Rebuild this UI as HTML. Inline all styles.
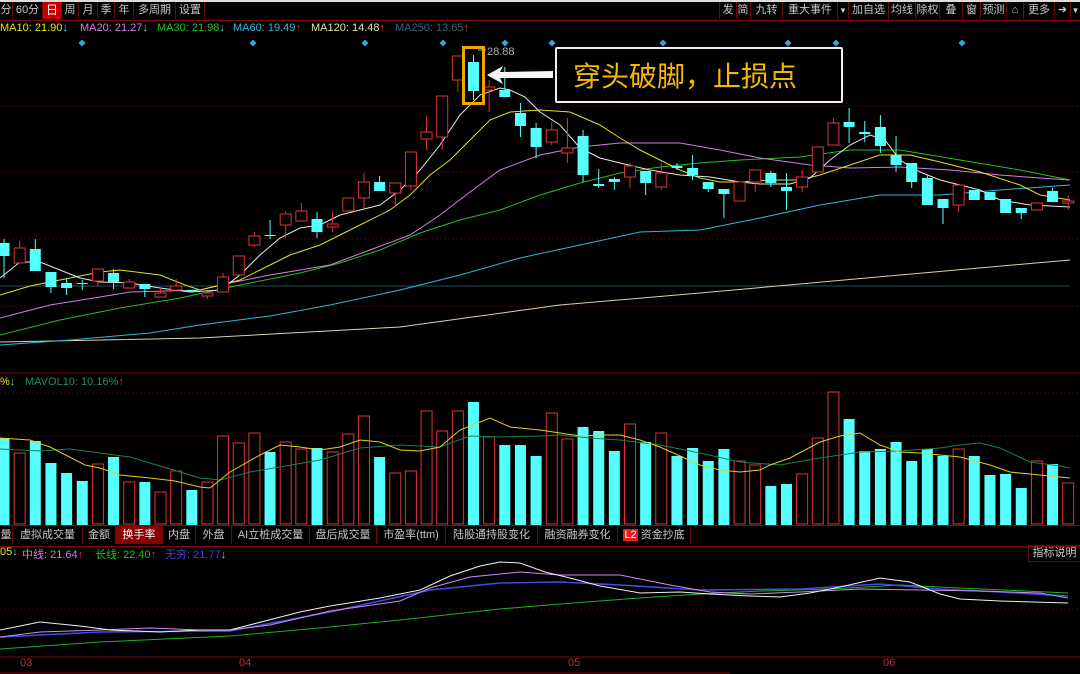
<!DOCTYPE html>
<html><head><meta charset="utf-8">
<style>
html,body{margin:0;padding:0;background:#000;}
body{width:1080px;height:674px;overflow:hidden;position:relative;font-family:"Liberation Sans","Noto Sans CJK SC",sans-serif;}
.t{position:absolute;white-space:nowrap;font-size:11px;}
.b{position:absolute;top:2px;height:17px;line-height:17px;font-size:11px;color:#c8c8c8;border-right:1px solid #6a0a0a;text-align:center;white-space:nowrap;overflow:hidden;}
.tb{position:absolute;top:526px;height:18px;line-height:18px;font-size:11px;color:#c8c8c8;border-right:1px solid #6a0a0a;text-align:center;white-space:nowrap;}
svg{position:absolute;left:0;top:0;}
</style></head><body>
<div style="position:absolute;left:0;top:0;width:1080px;height:2px;background:#ddd"></div>
<div style="position:absolute;left:0;top:20px;width:1080px;height:1px;background:#7a0c0c"></div>
<div class="b" style="left:0;width:12px">分</div>
<div class="b" style="left:13px;width:29px">60分</div>
<div class="b" style="left:43px;width:18px;background:#c40000;color:#fff;font-size:12px">日</div>
<div class="b" style="left:62px;width:16px">周</div>
<div class="b" style="left:79px;width:18px">月</div>
<div class="b" style="left:98px;width:16px">季</div>
<div class="b" style="left:115px;width:18px">年</div>
<div class="b" style="left:134px;width:41px">多周期</div>
<div class="b" style="left:176px;width:28px">设置</div>

<div class="b" style="left:719px;width:16px;border-left:1px solid #6a0a0a">发</div>
<div class="b" style="left:736px;width:14px">简</div>
<div class="b" style="left:751px;width:31px">九转</div>
<div class="b" style="left:783px;width:54px">重大事件</div>
<div class="b" style="left:838px;width:10px;font-size:8px">▼</div>
<div class="b" style="left:849px;width:39px">加自选</div>
<div class="b" style="left:889px;width:26px">均线</div>
<div class="b" style="left:916px;width:23px">除权</div>
<div class="b" style="left:940px;width:22px">叠</div>
<div class="b" style="left:963px;width:17px">窗</div>
<div class="b" style="left:981px;width:25px">预测</div>
<div class="b" style="left:1007px;width:16px">⌂</div>
<div class="b" style="left:1024px;width:30px">更多</div>
<div class="b" style="left:1055px;width:15px">➜</div>
<div class="b" style="left:1071px;width:9px;border:none;font-size:8px">▼</div>

<div class="t" style="left:0;top:22px;color:#e8e800">MA10: 21.90<span style="color:#5ad8ff">↓</span></div>
<div class="t" style="left:80px;top:22px;color:#d080e0">MA20: 21.27<span style="color:#5ad8ff">↓</span></div>
<div class="t" style="left:157px;top:22px;color:#20c020">MA30: 21.98<span style="color:#5ad8ff">↓</span></div>
<div class="t" style="left:233px;top:22px;color:#30b8d8">MA60: 19.49<span style="color:#ff3030">↑</span></div>
<div class="t" style="left:311px;top:22px;color:#e8e0b0">MA120: 14.48<span style="color:#ff3030">↑</span></div>
<div class="t" style="left:395px;top:22px;color:#3c6078">MA250: 13.65<span style="color:#ff3030">↑</span></div>

<div class="t" style="left:0;top:376px;color:#e8e800">%<span style="color:#5ad8ff">↓</span></div>
<div class="t" style="left:25px;top:376px;color:#1a9060">MAVOL10: 10.16%<span style="color:#ff3030">↑</span></div>

<div style="position:absolute;left:0;top:525px;width:1080px;height:20px;border-top:1px solid #7a0c0c;border-bottom:1px solid #7a0c0c"></div>
<div class="tb" style="left:0;width:12px">量</div>
<div class="tb" style="left:13px;width:69px">虚拟成交量</div>
<div class="tb" style="left:83px;width:32px">金额</div>
<div class="tb" style="left:116px;width:46px;background:#8a0000;color:#fff">换手率</div>
<div class="tb" style="left:163px;width:32px">内盘</div>
<div class="tb" style="left:196px;width:35px">外盘</div>
<div class="tb" style="left:232px;width:77px">AI立桩成交量</div>
<div class="tb" style="left:310px;width:66px">盘后成交量</div>
<div class="tb" style="left:377px;width:68px">市盈率(ttm)</div>
<div class="tb" style="left:446px;width:91px">陆股通持股变化</div>
<div class="tb" style="left:538px;width:79px">融资融券变化</div>
<div class="tb" style="left:618px;width:72px"><span style="background:#e02020;color:#fff;padding:0 1px">L2</span> 资金抄底</div>
<div class="tb" style="left:1028px;top:545px;width:51px;border:1px solid #6a0a0a;height:15px;line-height:15px">指标说明</div>

<div class="t" style="left:0;top:546px;color:#e8e800">05<span style="color:#5ad8ff">↓</span></div>
<div class="t" style="left:22px;top:546px;color:#d080e0">中线: 21.64<span style="color:#ff3030">↑</span></div>
<div class="t" style="left:95px;top:546px;color:#20c020">长线: 22.40<span style="color:#ff3030">↑</span></div>
<div class="t" style="left:165px;top:546px;color:#4040e0">无穷: 21.77<span style="color:#5ad8ff">↓</span></div>

<div class="t" style="left:20px;top:657px;color:#c03030">03</div>
<div class="t" style="left:239px;top:657px;color:#c03030">04</div>
<div class="t" style="left:568px;top:657px;color:#c03030">05</div>
<div class="t" style="left:883px;top:657px;color:#c03030">06</div>

<svg id="s" width="1080" height="674" style="pointer-events:none"></svg>

<div style="position:absolute;left:555px;top:47px;width:284px;height:52px;border:2px solid #f0f0f0;border-radius:2px;background:#000;color:#f5b800;font-size:28px;line-height:52px;text-indent:16px;font-family:'Noto Sans CJK SC',sans-serif">穿头破脚，止损点</div>
<div class="t" style="left:487px;top:46px;color:#b0b0b0;font-size:11px">28.88</div>

<script>
var S='';
function L(pts,c,w){S+='<polyline fill="none" stroke="'+c+'" stroke-width="'+(w||1)+'" points="'+pts.map(p=>p.join(',')).join(' ')+'"/>';}
[106,172,239,306].forEach(y=>S+='<line x1="0" x2="1080" y1="'+y+'" y2="'+y+'" stroke="#4a0000" stroke-dasharray="2,2"/>');
[393,436,609].forEach(y=>S+='<line x1="0" x2="1080" y1="'+y+'" y2="'+y+'" stroke="#4a0000" stroke-dasharray="2,2"/>');
S+='<line x1="0" x2="1080" y1="373" y2="373" stroke="#7a0c0c"/>';
S+='<line x1="0" x2="1080" y1="657" y2="657" stroke="#7a0c0c"/>';
S+='<line x1="0" x2="730" y1="673" y2="673" stroke="#7a0c0c"/>';
[82,253,365,443,505,552,663,788,836,962].forEach(x=>S+='<rect x="'+(x-2.5)+'" y="40.5" width="5" height="5" fill="#3aa0e0" transform="rotate(45 '+x+' 43)"/>');
L([[0,286],[1070,286]],'#2a4a5a');
L([[0,342],[200,338],[400,327],[560,305],[700,293],[900,275],[1070,260]],'#d8d0b0');
L([[0,345],[70,340],[150,333],[200,325],[270,316],[330,305],[400,290],[460,275],[520,258],[580,245],[640,232],[700,230],[760,218],[820,205],[880,195],[940,195],[1000,190],[1070,185]],'#30b8d0');
L([[0,335],[60,320],[120,308],[180,298],[240,285],[300,273],[340,263],[380,250],[420,233],[460,220],[500,210],[540,195],[580,183],[620,173],[660,167],[700,163],[740,160],[800,157],[850,150],[900,150],[960,160],[1020,170],[1070,180]],'#20c020');
L([[0,318],[50,305],[100,297],[130,292],[200,290],[230,283],[270,275],[330,265],[370,250],[410,235],[440,215],[470,192],[500,170],[540,155],[580,147],[620,143],[680,143],[720,150],[760,158],[810,165],[850,168],[900,167],[950,170],[1000,175],[1040,178],[1070,180]],'#d080e0');
L([[0,295],[30,286],[60,280],[100,272],[120,270],[160,275],[185,285],[200,290],[220,285],[240,280],[260,270],[290,255],[320,245],[340,235],[360,225],[390,210],[410,195],[430,175],[450,160],[470,140],[490,120],[510,112],[540,110],[570,112],[600,125],[620,138],[640,150],[660,160],[680,170],[700,178],[720,182],[740,182],[770,180],[800,180],[820,175],[850,165],[880,155],[910,155],[940,162],[980,172],[1020,185],[1040,195],[1070,200]],'#e0e020');
L([[0,278],[20,262],[40,262],[60,270],[80,278],[100,282],[130,283],[160,288],[190,292],[220,290],[240,275],[260,255],[280,238],[300,228],[320,225],[340,215],[360,210],[380,205],[400,190],[420,170],[440,145],[460,115],[480,95],[500,88],[510,90],[525,97],[540,112],[560,125],[580,148],[600,158],[620,163],[650,170],[680,175],[710,177],[740,182],[760,184],[790,184],[810,178],[830,160],[850,145],[870,135],[885,140],[900,160],[920,172],[940,180],[960,185],[980,190],[1000,200],[1030,205],[1070,207]],'#e8e8e8');
var c=[[243,256,239,278,0],[248,263,241,263,1],[249,271,239,271,0],[272,287,272,293,0],[283,288,278,295,0],[283,284,280,290,0],[269,281,269,286,1],[273,282,269,289,0],[282,288,279,288,1],[284,289,284,297,0],[293,297,287,297,1],[286,290,279,290,1],[290,292,290,292,0],[293,296,293,299,1],[277,292,273,292,1],[256,275,256,275,1],[236,245,232,247,1],[235,236,220,239,0],[214,225,211,238,1],[211,221,203,221,1],[219,232,212,238,0],[224,227,211,232,1],[198,211,198,211,1],[182,198,173,208,1],[182,191,176,191,0],[183,193,183,207,1],[152,186,152,190,1],[132,139,116,150,1],[96,137,96,150,1],[56,80,56,92,1],[62,91,55,100,0],[87,90,80,112,1],[90,97,67,97,0],[113,126,103,137,0],[128,147,123,158,0],[130,142,122,145,1],[148,153,118,163,1],[136,175,130,182,0],[184,186,169,188,0],[179,182,177,190,0],[166,177,163,188,1],[171,183,171,195,0],[173,187,163,190,1],[166,168,163,170,0],[168,175,155,180,0],[182,189,182,192,0],[189,194,189,218,0],[182,201,182,201,1],[170,182,170,192,1],[173,183,171,187,0],[187,191,173,210,0],[177,187,170,192,1],[147,172,147,172,1],[123,145,118,145,1],[122,127,108,143,0],[132,134,121,142,0],[127,146,115,153,0],[155,165,136,172,0],[163,182,163,188,0],[178,205,175,205,0],[199,208,199,224,0],[185,205,185,212,1],[190,200,190,200,0],[192,200,192,200,0],[199,213,199,213,0],[208,213,208,219,0],[203,210,203,210,1],[191,202,188,202,0],[201,203,195,210,1]];
var v=[438,453,441,463,473,481,464,457,482,482,492,471,490,482,436,443,433,452,442,449,448,452,434,416,457,473,471,411,431,411,402,437,445,445,456,413,439,427,431,451,424,442,433,456,448,461,449,461,465,486,484,474,438,392,419,451,449,442,461,449,456,449,456,475,474,488,461,464,483];
var R='#e03535',C='#55ffff';
c.forEach((d,i)=>{var x=4+15.65*i;var col=d[4]?R:C;
 S+='<line x1="'+x+'" x2="'+x+'" y1="'+d[2]+'" y2="'+d[3]+'" stroke="'+col+'"/>';
 var h=Math.max(d[1]-d[0],1);
 if(d[4])S+='<rect x="'+(x-5.5)+'" y="'+d[0]+'" width="11" height="'+h+'" fill="#000" stroke="'+R+'"/>';
 else S+='<rect x="'+(x-5.5)+'" y="'+d[0]+'" width="11" height="'+h+'" fill="'+C+'"/>';
 var t=v[i];
 if(d[4])S+='<rect x="'+(x-5.5)+'" y="'+t+'" width="11" height="'+(524-t)+'" fill="none" stroke="'+R+'"/>';
 else S+='<rect x="'+(x-5.5)+'" y="'+t+'" width="11" height="'+(525-t)+'" fill="'+C+'"/>';
});
L([[0,449],[40,451],[70,449],[100,453],[130,457],[160,466],[200,478],[220,480],[250,472],[280,467],[320,460],[360,448],[400,445],[440,447],[470,436],[500,437],[540,436],[560,435],[590,438],[620,440],[660,445],[700,453],[740,462],[780,465],[820,458],[860,452],[900,451],[940,448],[960,445],[980,443],[1000,448],[1030,462],[1060,466],[1070,468]],'#1a8050');
L([[0,438],[30,440],[50,447],[85,465],[100,468],[120,475],[150,478],[175,481],[200,487],[210,488],[230,472],[260,455],[280,445],[300,447],[320,450],[340,447],[360,440],[380,442],[400,450],[420,451],[440,447],[460,430],[490,418],[510,427],[540,430],[560,433],[580,436],[600,435],[620,435],[640,440],[660,447],[680,456],[700,465],[720,470],[740,472],[760,470],[770,465],[790,458],[820,442],[840,436],[860,433],[880,445],[900,452],[920,453],[940,455],[960,457],[990,465],[1010,472],[1040,475],[1070,478]],'#e0d020');
L([[0,649],[100,642],[230,636],[330,627],[400,620],[500,609],[560,604],[640,598],[700,594],[760,591],[830,589],[900,585],[960,588],[1068,593]],'#20b020');
L([[0,637],[100,632],[230,631],[330,612],[430,590],[500,583],[560,582],[620,585],[700,590],[800,589],[880,584],[940,589],[1000,592],[1068,596]],'#4848e8',1.5);
L([[0,637],[40,632],[100,630],[150,628],[200,630],[230,630],[270,625],[330,611],[400,601],[430,588],[470,577],[520,572],[560,575],[620,575],[670,585],[710,592],[750,594],[800,592],[860,589],[920,590],[980,591],[1040,593],[1068,598]],'#c890e8');
L([[0,630],[40,622],[80,626],[110,630],[160,632],[200,630],[230,630],[300,612],[330,606],[380,598],[420,590],[450,576],[480,566],[500,562],[520,563],[545,572],[570,578],[600,586],[640,593],[680,592],[710,594],[750,596],[780,597],[810,593],[840,587],[880,578],[910,582],[940,594],[960,599],[1000,601],[1068,603]],'#f0f0f0');
S+='<rect x="463.5" y="47.5" width="20" height="56" fill="none" stroke="#f0a800" stroke-width="3"/>';
S+='<line x1="478" y1="50" x2="486" y2="50" stroke="#b0b0b0"/>';
S+='<polygon points="487,75 503,66 500,72 553,71 553,78 500,78 503,84" fill="#f4f4f4"/>';
document.getElementById('s').innerHTML=S;
</script>
</body></html>
